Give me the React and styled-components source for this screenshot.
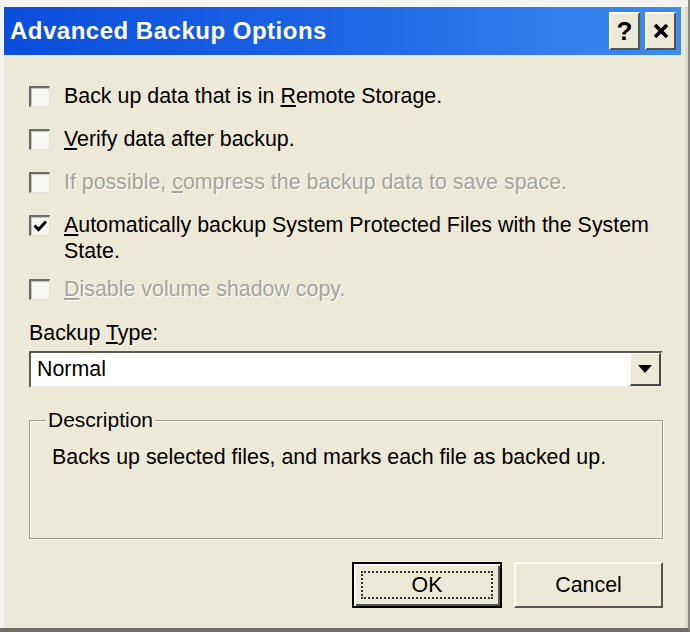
import React from "react";
import styled, { createGlobalStyle } from "styled-components";

const GlobalStyle = createGlobalStyle`
  html, body {
    margin: 0;
    padding: 0;
    background: #f3f2ee;
  }
  * { box-sizing: border-box; }
`;

export default function App() {
  return (
    <>
      <GlobalStyle />
      <Frame>
        <TitleBar>
          <Title>Advanced Backup Options</Title>
          <TitleButtons>
            <CaptionButton>?</CaptionButton>
            <CaptionButton>
              <svg width="16" height="16" viewBox="0 0 16 16">
                <path d="M2 2 L14 14 M14 2 L2 14" stroke="#000" strokeWidth="3.6" />
              </svg>
            </CaptionButton>
          </TitleButtons>
        </TitleBar>

        <Body>
          <Options>
            <Option>
              <Box />
              <Label>Back up data that is in <u>R</u>emote Storage.</Label>
            </Option>
            <Option>
              <Box />
              <Label><u>V</u>erify data after backup.</Label>
            </Option>
            <Option>
              <Box />
              <Label disabled>If possible, <u>c</u>ompress the backup data to save space.</Label>
            </Option>
            <Option>
              <Box>
                <svg width="15" height="15" viewBox="0 0 15 15">
                  <path d="M1.5 6.5 L5.5 10.5 L13 2.5" stroke="#000" strokeWidth="3" fill="none" />
                </svg>
              </Box>
              <Label>
                <u>A</u>utomatically backup System Protected Files with the System State.
              </Label>
            </Option>
            <Option last>
              <Box />
              <Label disabled><u>D</u>isable volume shadow copy.</Label>
            </Option>
          </Options>

          <FieldLabel>Backup <u>T</u>ype:</FieldLabel>
          <Select>
            <SelectValue>Normal</SelectValue>
            <DropButton>
              <svg width="14" height="8" viewBox="0 0 14 8">
                <path d="M0 0 L14 0 L7 8 Z" fill="#000" />
              </svg>
            </DropButton>
          </Select>

          <Group>
            <Legend>Description</Legend>
            <GroupText>Backs up selected files, and marks each file as backed up.</GroupText>
          </Group>

          <Footer>
            <Button primary>
              <Focus>OK</Focus>
            </Button>
            <Button>Cancel</Button>
          </Footer>
        </Body>
      </Frame>
    </>
  );
}

const Frame = styled.div`
  width: 690px;
  height: 632px;
  padding: 7px 7px 0 4px;
  background: #ece9d8;
  border-right: 2px solid #8c8a80;
  border-bottom: 4px solid #6f6d66;
  box-shadow: inset 0 7px 0 #f4f3ef, inset 4px 0 0 #f4f3ef, inset -3px 0 0 #dcdad0;
  display: flex;
  flex-direction: column;
  font-family: "Liberation Sans", Arial, sans-serif;
  overflow: hidden;
`;

const TitleBar = styled.div`
  height: 48px;
  display: flex;
  align-items: center;
  justify-content: space-between;
  padding: 0 5px 0 6px;
  background: linear-gradient(to right, #0a4fdc 0%, #1a62e4 45%, #3d8cf0 100%);
`;

const Title = styled.div`
  color: #fff;
  font-weight: bold;
  font-size: 24px;
  letter-spacing: 0.5px;
`;

const TitleButtons = styled.div`
  display: flex;
  gap: 5px;
`;

const CaptionButton = styled.div`
  width: 31px;
  height: 38px;
  display: flex;
  align-items: center;
  justify-content: center;
  background: #ece9d8;
  border-top: 2px solid #fbfaf6;
  border-left: 2px solid #fbfaf6;
  border-right: 2px solid #55544f;
  border-bottom: 2px solid #55544f;
  font-weight: bold;
  font-size: 26px;
  color: #000;
`;

const Body = styled.div`
  flex: 1;
  display: flex;
  flex-direction: column;
  padding: 28px 18px 0 25px;
`;

const Options = styled.div`
  display: flex;
  flex-direction: column;
  gap: 17px;
`;

const Option = styled.div`
  display: flex;
  align-items: flex-start;
  gap: 14px;
  margin-top: ${({ last }) => (last ? "-5px" : "0")};
`;

const Box = styled.div`
  flex: none;
  width: 21px;
  height: 21px;
  margin-top: 3px;
  display: flex;
  align-items: center;
  justify-content: center;
  background: #f7f6f2;
  border-top: 2px solid #6c6b66;
  border-left: 2px solid #6c6b66;
  border-right: 1px solid #e4e2d8;
  border-bottom: 1px solid #e4e2d8;
  box-shadow: inset 1px 1px 0 #c9c7bd;
`;

const Label = styled.div`
  max-width: 590px;
  font-size: 21.4px;
  line-height: 26px;
  color: ${({ disabled }) => (disabled ? "#a5a39b" : "#000")};
  text-shadow: ${({ disabled }) => (disabled ? "1px 1px 0 #fff" : "none")};
`;

const FieldLabel = styled.div`
  margin-top: 18px;
  font-size: 21.4px;
  line-height: 26px;
  color: #000;
`;

const Select = styled.div`
  margin-top: 5px;
  height: 37px;
  display: flex;
  align-items: stretch;
  background: #fff;
  border-top: 2px solid #5a5954;
  border-left: 2px solid #5a5954;
  border-right: 2px solid #ecebe4;
  border-bottom: 2px solid #ecebe4;
`;

const SelectValue = styled.div`
  flex: 1;
  display: flex;
  align-items: center;
  padding-left: 6px;
  font-size: 21.4px;
  color: #000;
`;

const DropButton = styled.div`
  width: 31px;
  display: flex;
  align-items: center;
  justify-content: center;
  background: #ece9d8;
  border-top: 1px solid #f8f7f2;
  border-left: 1px solid #f8f7f2;
  border-right: 2px solid #4a4944;
  border-bottom: 2px solid #4a4944;
`;

const Group = styled.fieldset`
  margin: 20px 0 0 0;
  padding: 0 22px 0 22px;
  height: 131px;
  border: 1px solid #9c9a90;
  box-shadow: 1px 1px 0 #fff, inset 1px 1px 0 #fff;
`;

const Legend = styled.legend`
  padding: 0 2px;
  margin-left: -6px;
  font-size: 21px;
  line-height: 24px;
  color: #000;
`;

const GroupText = styled.div`
  margin-top: 12px;
  font-size: 21.4px;
  line-height: 26px;
  color: #000;
`;

const Footer = styled.div`
  display: flex;
  justify-content: flex-end;
  gap: 12px;
  margin-top: 23px;
`;

const Button = styled.div`
  width: ${({ primary }) => (primary ? "150px" : "149px")};
  height: 46px;
  display: flex;
  align-items: center;
  justify-content: center;
  font-size: 21.4px;
  color: #000;
  background: #ece9d8;
  border-top: 2px solid ${({ primary }) => (primary ? "#000" : "#fbfaf6")};
  border-left: 2px solid ${({ primary }) => (primary ? "#000" : "#fbfaf6")};
  border-right: 2px solid ${({ primary }) => (primary ? "#000" : "#55544f")};
  border-bottom: 2px solid ${({ primary }) => (primary ? "#000" : "#55544f")};
  box-shadow: ${({ primary }) =>
    primary ? "inset 2px 2px 0 #fbfaf6, inset -2px -2px 0 #55544f" : "none"};
`;

const Focus = styled.div`
  width: calc(100% - 14px);
  height: calc(100% - 14px);
  display: flex;
  align-items: center;
  justify-content: center;
  border: 2px dotted #333;
`;
